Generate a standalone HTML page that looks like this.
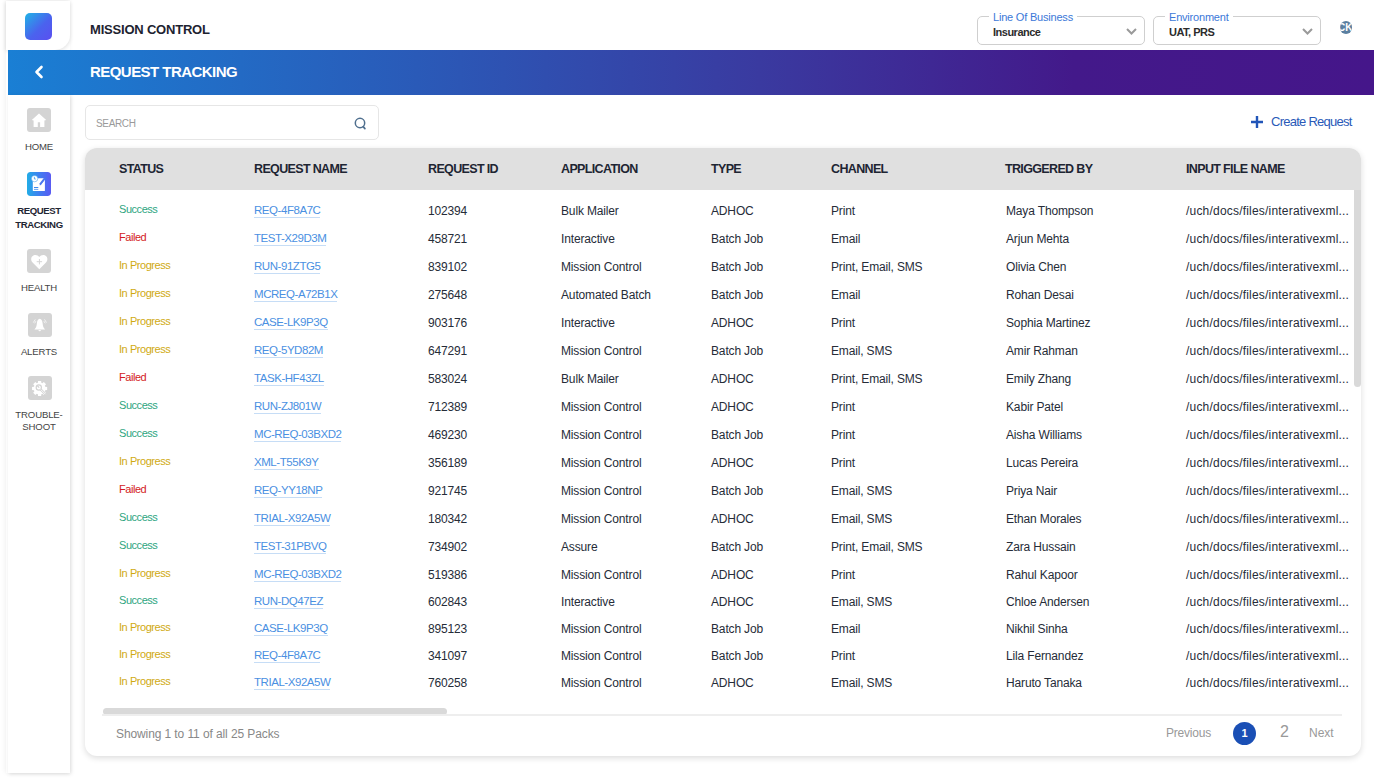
<!DOCTYPE html>
<html><head><meta charset="utf-8">
<style>
*{box-sizing:border-box;margin:0;padding:0}
html,body{width:1374px;height:782px;overflow:hidden;background:#fff;font-family:"Liberation Sans",sans-serif;color:#2b3240}
.abs{position:absolute}
#logo{left:6px;top:1px;width:64px;height:49px;background:#fff;border-bottom-right-radius:15px;box-shadow:0 1px 4px rgba(0,0,0,.14)}
#logosq{left:25px;top:13px;width:27px;height:27px;border-radius:5px;background:linear-gradient(135deg,#20b4e6 0%,#4a63ee 55%,#5b4ff0 100%)}
#mc{left:90px;top:22px;font-size:13px;font-weight:bold;color:#1d2330;letter-spacing:-0.2px;white-space:nowrap}
.dd{top:16px;width:168px;height:29px;border:1px solid #cfcfcf;border-radius:5px;background:#fff}
.dd .lg{position:absolute;left:11px;top:-6px;background:#fff;padding:0 4px;font-size:11px;color:#3b78d8;line-height:13px;letter-spacing:-0.2px;white-space:nowrap}
.dd .val{position:absolute;left:15px;top:9px;font-size:11px;font-weight:bold;color:#2c2c2c;line-height:13px;letter-spacing:-0.5px;white-space:nowrap}
.dd svg{position:absolute;right:7px;top:11px}
#avatar{left:1339.5px;top:21px;width:12.5px;height:13px;border-radius:50%;background:#5a7fa0;color:#fff;font-size:10px;font-weight:bold;line-height:13px;text-indent:-1px;letter-spacing:0;overflow:hidden;white-space:nowrap;display:flex;justify-content:center}
#banner{left:8px;top:50px;width:1366px;height:45px;background:linear-gradient(90deg,#1a7fd4 0%,#2a5ab8 30%,#3a3aa0 55%,#43198a 78%,#45168a 100%)}
#rt{left:90px;top:63px;font-size:15px;font-weight:bold;color:#fff;letter-spacing:-0.55px;white-space:nowrap}
#side{left:8px;top:95px;width:62px;height:678px;background:#fff;box-shadow:1px 1px 4px rgba(0,0,0,.13)}
.nav{position:absolute;left:0;width:62px;text-align:center}
.nav .ic{position:absolute;left:19px;top:0;width:24px;height:24px;border-radius:3px}
#nal .ic,#ntr .ic{left:20px}
.nav .lb{position:absolute;left:-5px;margin-top:1px;width:72px;font-size:9.6px;color:#444;line-height:13.5px;text-align:center;letter-spacing:-0.15px}
.nav.act .lb{color:#1f2633;font-weight:bold;letter-spacing:-0.4px}
#search{left:85px;top:105px;width:294px;height:35px;border:1px solid #e6e6e6;border-radius:5px;background:#fff}
#search .ph{position:absolute;left:10px;top:12px;font-size:10px;color:#9a9a9a;letter-spacing:-0.35px}
#search svg{position:absolute;left:268px;top:10.5px}
#create{left:1251px;top:114px;white-space:nowrap}
#create span{position:absolute;left:20px;top:0px;font-size:13px;color:#2a5ab8;letter-spacing:-0.75px}
#card{left:85px;top:148px;width:1276px;height:608px;background:#fff;border-radius:12px;box-shadow:0 2px 6px rgba(0,0,0,.14);overflow:hidden}
#thead{position:absolute;left:0;top:0;width:1276px;height:42px;background:#e0e0e0}
.th{position:absolute;top:14px;font-size:12.5px;line-height:15px;font-weight:bold;color:#1e2533;letter-spacing:-0.65px;white-space:nowrap}
.row{position:absolute;left:0;width:1270px;height:20px}
.row div{position:absolute;top:0;white-space:nowrap;font-size:12px;line-height:14px;letter-spacing:-0.15px;color:#262c38}
.row .st{font-size:11px;top:-2px;letter-spacing:-0.45px}
.row .s{color:#2ea57f}.row .f{color:#d31b23}.row .p{color:#d0aa12}
.row .fn{letter-spacing:0.2px}
.row .ln{color:#4a90e2;font-size:11.5px;letter-spacing:-0.45px;border-bottom:1.5px solid #c6ddf6;line-height:13px}
#vscroll{left:1269px;top:42px;width:7px;height:197px;background:#d9d9d9;border-radius:0 0 4px 4px}
#hscroll{left:18px;top:560px;width:344px;height:7px;background:#d9d9d9;border-radius:4px}
#sep{left:17px;top:566px;width:1240px;height:2px;background:#eeeeee}
#showing{left:31px;top:579px;font-size:12px;color:#888;letter-spacing:-0.1px;white-space:nowrap}
.pg{position:absolute;white-space:nowrap;color:#999;font-size:12px}
#pg1{position:absolute;left:1148px;top:574px;width:23px;height:23px;border-radius:50%;background:#1a4fb5;color:#fff;font-size:11px;font-weight:bold;text-align:center;line-height:23px}
</style></head><body>
<div class="abs" style="left:6px;top:1px;width:64px;height:772px;box-shadow:-1px 0 5px rgba(0,0,0,.06)"></div>
<div id="logo" class="abs"></div>
<div id="logosq" class="abs"></div>
<div id="mc" class="abs">MISSION CONTROL</div>

<div class="abs dd" style="left:977px"><div class="lg">Line Of Business</div><div class="val">Insurance</div>
<svg width="11" height="7" viewBox="0 0 11 7"><path d="M1 1 L5.5 5.5 L10 1" fill="none" stroke="#9a9a9a" stroke-width="2"/></svg></div>
<div class="abs dd" style="left:1153px"><div class="lg">Environment</div><div class="val">UAT, PRS</div>
<svg width="11" height="7" viewBox="0 0 11 7"><path d="M1 1 L5.5 5.5 L10 1" fill="none" stroke="#9a9a9a" stroke-width="2"/></svg></div>
<div id="avatar" class="abs">CK</div>

<div id="banner" class="abs"></div>
<svg class="abs" style="left:33px;top:65px" width="12" height="14" viewBox="0 0 12 14"><path d="M8.5 2 L3.5 7 L8.5 12" fill="none" stroke="#fff" stroke-width="2.6" stroke-linecap="round" stroke-linejoin="round"/></svg>
<div id="rt" class="abs">REQUEST TRACKING</div>

<div id="side" class="abs">
 <div class="nav" style="top:13px"><svg class="ic" width="24" height="24" viewBox="0 0 24 24" style="background:#d4d4d4"><path d="M12 5.6 L19.2 12.1 L17.4 12.6 V19 H13.1 V14.2 H10.8 V19 H6.6 V12.6 L4.8 12.1 Z" fill="#fff"/></svg><div class="lb" style="top:31px">HOME</div></div>
 <div class="nav act" style="top:77px"><svg class="ic" width="24" height="24" viewBox="0 0 24 24"><defs><linearGradient id="rg" x1="0" y1="0" x2="1" y2="0"><stop offset="0" stop-color="#22ade6"/><stop offset="0.5" stop-color="#3f7ff0"/><stop offset="1" stop-color="#5a5af2"/></linearGradient></defs><rect width="24" height="24" rx="3" fill="url(#rg)"/><rect x="5.8" y="6.2" width="12.1" height="12.8" rx="0.6" fill="#fff"/><path d="M18.2 5.6 L13.2 12.4 L12.6 13.4 L13.6 12.9 L18.6 6.6 Z" fill="#4a78ee"/><path d="M17.9 6.2 L12.9 12.7" stroke="#4a78ee" stroke-width="1.9"/><circle cx="7.6" cy="6.6" r="3.2" fill="#fff" stroke="#3a9aea" stroke-width="0.5"/><path d="M7.4 4.8 V7 H8.8" fill="none" stroke="#3a9aea" stroke-width="0.8"/><rect x="7" y="15" width="4.3" height="1.1" fill="#3f8aee"/><rect x="7" y="17.1" width="4.3" height="0.7" fill="#3f8aee"/></svg><div class="lb" style="top:31px">REQUEST<br>TRACKING</div></div>
 <div class="nav" style="top:154px"><svg class="ic" width="24" height="24" viewBox="0 0 24 24" style="background:#d4d4d4"><path d="M12.3 20.2 L5.6 13.6 C3.2 11.2 3.9 6.8 7.6 6.1 C9.7 5.8 11.2 6.8 12.3 8.1 C13.4 6.8 14.9 5.8 17 6.1 C20.7 6.8 21.4 11.2 19 13.6 Z" fill="#fff"/><path d="M12.4 10 V15.4 M9.7 12.7 H15.1" stroke="#d4d4d4" stroke-width="1"/></svg><div class="lb" style="top:31px">HEALTH</div></div>
 <div class="nav" style="top:218px" id="nal"><svg class="ic" width="24" height="24" viewBox="0 0 24 24" style="background:#d4d4d4"><path d="M11.7 5.8 C10.2 6.1 9.1 7.6 8.9 10.2 C8.7 13 7.9 15 6.4 16.6 H17.1 C15.6 15 14.8 13 14.6 10.2 C14.4 7.6 13.2 6.1 11.7 5.8 Z" fill="#fff"/><ellipse cx="11.7" cy="17.6" rx="1.3" ry="0.7" fill="#fff"/><path d="M5.3 9.6 L7.3 6.4 M6.6 10.3 L7.9 8.2 M18.5 9.6 L16.5 6.4 M17.2 10.3 L15.9 8.2" stroke="#fff" stroke-width="0.9" opacity="0.8"/></svg><div class="lb" style="top:31px">ALERTS</div></div>
 <div class="nav" style="top:281px" id="ntr"><svg class="ic" width="24" height="24" viewBox="0 0 24 24" style="background:#d4d4d4"><path d="M19.15 10.97 L19.15 14.03 L17.24 14.24 L16.82 15.25 L18.02 16.75 L15.85 18.92 L14.35 17.72 L13.34 18.14 L13.13 20.05 L10.07 20.05 L9.86 18.14 L8.85 17.72 L7.35 18.92 L5.18 16.75 L6.38 15.25 L5.96 14.24 L4.05 14.03 L4.05 10.97 L5.96 10.76 L6.38 9.75 L5.18 8.25 L7.35 6.08 L8.85 7.28 L9.86 6.86 L10.07 4.95 L13.13 4.95 L13.34 6.86 L14.35 7.28 L15.85 6.08 L18.02 8.25 L16.82 9.75 L17.24 10.76 Z" fill="#fff"/><circle cx="10.8" cy="11.5" r="2.6" fill="none" stroke="#d4d4d4" stroke-width="1.2"/><path d="M12.6 13.4 L17.6 18.4" stroke="#d4d4d4" stroke-width="2.2"/><path d="M12.8 13.6 L17.4 18.2" stroke="#fff" stroke-width="0.9"/><path d="M9.4 9.8 L11.2 11.6" stroke="#d4d4d4" stroke-width="1.3"/></svg><div class="lb" style="top:32px;line-height:12px">TROUBLE-<br>SHOOT</div></div>
</div>

<div id="search" class="abs"><div class="ph">SEARCH</div>
<svg width="14" height="14" viewBox="0 0 14 14"><circle cx="6" cy="6" r="4.7" fill="none" stroke="#4f6f8e" stroke-width="1.5"/><path d="M9.2 9.6 L10.9 11.6" stroke="#4f6f8e" stroke-width="1.7" stroke-linecap="round"/></svg></div>

<div id="create" class="abs"><svg width="14" height="14" viewBox="0 0 14 14" style="position:absolute;left:-0.7px;top:0.5px"><path d="M7 1 V13 M1 7 H13" stroke="#2155b8" stroke-width="2.4"/></svg><span>Create Request</span></div>

<div id="card" class="abs">
 <div id="thead">
  <div class="th" style="left:34px">STATUS</div>
  <div class="th" style="left:169px">REQUEST NAME</div>
  <div class="th" style="left:343px">REQUEST ID</div>
  <div class="th" style="left:476px">APPLICATION</div>
  <div class="th" style="left:626px">TYPE</div>
  <div class="th" style="left:746px">CHANNEL</div>
  <div class="th" style="left:920px">TRIGGERED BY</div>
  <div class="th" style="left:1101px">INPUT FILE NAME</div>
 </div>
 <div id="rows">
 <div class="row" style="top:56px"><div class="st s" style="left:34px">Success</div><div class="ln" style="left:169px">REQ-4F8A7C</div><div style="left:343px">102394</div><div style="left:476px">Bulk Mailer</div><div style="left:626px">ADHOC</div><div style="left:746px">Print</div><div style="left:921px">Maya Thompson</div><div class="fn" style="left:1101px">/uch/docs/files/interativexml...</div></div>
 <div class="row" style="top:84px"><div class="st f" style="left:34px">Failed</div><div class="ln" style="left:169px">TEST-X29D3M</div><div style="left:343px">458721</div><div style="left:476px">Interactive</div><div style="left:626px">Batch Job</div><div style="left:746px">Email</div><div style="left:921px">Arjun Mehta</div><div class="fn" style="left:1101px">/uch/docs/files/interativexml...</div></div>
 <div class="row" style="top:112px"><div class="st p" style="left:34px">In Progress</div><div class="ln" style="left:169px">RUN-91ZTG5</div><div style="left:343px">839102</div><div style="left:476px">Mission Control</div><div style="left:626px">Batch Job</div><div style="left:746px">Print, Email, SMS</div><div style="left:921px">Olivia Chen</div><div class="fn" style="left:1101px">/uch/docs/files/interativexml...</div></div>
 <div class="row" style="top:140px"><div class="st p" style="left:34px">In Progress</div><div class="ln" style="left:169px">MCREQ-A72B1X</div><div style="left:343px">275648</div><div style="left:476px">Automated Batch</div><div style="left:626px">Batch Job</div><div style="left:746px">Email</div><div style="left:921px">Rohan Desai</div><div class="fn" style="left:1101px">/uch/docs/files/interativexml...</div></div>
 <div class="row" style="top:168px"><div class="st p" style="left:34px">In Progress</div><div class="ln" style="left:169px">CASE-LK9P3Q</div><div style="left:343px">903176</div><div style="left:476px">Interactive</div><div style="left:626px">ADHOC</div><div style="left:746px">Print</div><div style="left:921px">Sophia Martinez</div><div class="fn" style="left:1101px">/uch/docs/files/interativexml...</div></div>
 <div class="row" style="top:196px"><div class="st p" style="left:34px">In Progress</div><div class="ln" style="left:169px">REQ-5YD82M</div><div style="left:343px">647291</div><div style="left:476px">Mission Control</div><div style="left:626px">Batch Job</div><div style="left:746px">Email, SMS</div><div style="left:921px">Amir Rahman</div><div class="fn" style="left:1101px">/uch/docs/files/interativexml...</div></div>
 <div class="row" style="top:224px"><div class="st f" style="left:34px">Failed</div><div class="ln" style="left:169px">TASK-HF43ZL</div><div style="left:343px">583024</div><div style="left:476px">Bulk Mailer</div><div style="left:626px">ADHOC</div><div style="left:746px">Print, Email, SMS</div><div style="left:921px">Emily Zhang</div><div class="fn" style="left:1101px">/uch/docs/files/interativexml...</div></div>
 <div class="row" style="top:252px"><div class="st s" style="left:34px">Success</div><div class="ln" style="left:169px">RUN-ZJ801W</div><div style="left:343px">712389</div><div style="left:476px">Mission Control</div><div style="left:626px">ADHOC</div><div style="left:746px">Print</div><div style="left:921px">Kabir Patel</div><div class="fn" style="left:1101px">/uch/docs/files/interativexml...</div></div>
 <div class="row" style="top:280px"><div class="st s" style="left:34px">Success</div><div class="ln" style="left:169px">MC-REQ-03BXD2</div><div style="left:343px">469230</div><div style="left:476px">Mission Control</div><div style="left:626px">Batch Job</div><div style="left:746px">Print</div><div style="left:921px">Aisha Williams</div><div class="fn" style="left:1101px">/uch/docs/files/interativexml...</div></div>
 <div class="row" style="top:308px"><div class="st p" style="left:34px">In Progress</div><div class="ln" style="left:169px">XML-T55K9Y</div><div style="left:343px">356189</div><div style="left:476px">Mission Control</div><div style="left:626px">ADHOC</div><div style="left:746px">Print</div><div style="left:921px">Lucas Pereira</div><div class="fn" style="left:1101px">/uch/docs/files/interativexml...</div></div>
 <div class="row" style="top:336px"><div class="st f" style="left:34px">Failed</div><div class="ln" style="left:169px">REQ-YY18NP</div><div style="left:343px">921745</div><div style="left:476px">Mission Control</div><div style="left:626px">Batch Job</div><div style="left:746px">Email, SMS</div><div style="left:921px">Priya Nair</div><div class="fn" style="left:1101px">/uch/docs/files/interativexml...</div></div>
 <div class="row" style="top:364px"><div class="st s" style="left:34px">Success</div><div class="ln" style="left:169px">TRIAL-X92A5W</div><div style="left:343px">180342</div><div style="left:476px">Mission Control</div><div style="left:626px">ADHOC</div><div style="left:746px">Email, SMS</div><div style="left:921px">Ethan Morales</div><div class="fn" style="left:1101px">/uch/docs/files/interativexml...</div></div>
 <div class="row" style="top:392px"><div class="st s" style="left:34px">Success</div><div class="ln" style="left:169px">TEST-31PBVQ</div><div style="left:343px">734902</div><div style="left:476px">Assure</div><div style="left:626px">Batch Job</div><div style="left:746px">Print, Email, SMS</div><div style="left:921px">Zara Hussain</div><div class="fn" style="left:1101px">/uch/docs/files/interativexml...</div></div>
 <div class="row" style="top:420px"><div class="st p" style="left:34px">In Progress</div><div class="ln" style="left:169px">MC-REQ-03BXD2</div><div style="left:343px">519386</div><div style="left:476px">Mission Control</div><div style="left:626px">ADHOC</div><div style="left:746px">Print</div><div style="left:921px">Rahul Kapoor</div><div class="fn" style="left:1101px">/uch/docs/files/interativexml...</div></div>
 <div class="row" style="top:447px"><div class="st s" style="left:34px">Success</div><div class="ln" style="left:169px">RUN-DQ47EZ</div><div style="left:343px">602843</div><div style="left:476px">Interactive</div><div style="left:626px">ADHOC</div><div style="left:746px">Email, SMS</div><div style="left:921px">Chloe Andersen</div><div class="fn" style="left:1101px">/uch/docs/files/interativexml...</div></div>
 <div class="row" style="top:474px"><div class="st p" style="left:34px">In Progress</div><div class="ln" style="left:169px">CASE-LK9P3Q</div><div style="left:343px">895123</div><div style="left:476px">Mission Control</div><div style="left:626px">Batch Job</div><div style="left:746px">Email</div><div style="left:921px">Nikhil Sinha</div><div class="fn" style="left:1101px">/uch/docs/files/interativexml...</div></div>
 <div class="row" style="top:501px"><div class="st p" style="left:34px">In Progress</div><div class="ln" style="left:169px">REQ-4F8A7C</div><div style="left:343px">341097</div><div style="left:476px">Mission Control</div><div style="left:626px">Batch Job</div><div style="left:746px">Print</div><div style="left:921px">Lila Fernandez</div><div class="fn" style="left:1101px">/uch/docs/files/interativexml...</div></div>
 <div class="row" style="top:528px"><div class="st p" style="left:34px">In Progress</div><div class="ln" style="left:169px">TRIAL-X92A5W</div><div style="left:343px">760258</div><div style="left:476px">Mission Control</div><div style="left:626px">ADHOC</div><div style="left:746px">Email, SMS</div><div style="left:921px">Haruto Tanaka</div><div class="fn" style="left:1101px">/uch/docs/files/interativexml...</div></div>
 </div><!--/rows-->
 <div id="vscroll" class="abs"></div>
 <div id="hscroll" class="abs"></div>
 <div id="sep" class="abs"></div>
 <div id="showing" class="abs">Showing 1 to 11 of all 25 Packs</div>
 <div class="pg" style="left:1081px;top:578px;letter-spacing:-0.2px">Previous</div>
 <div id="pg1">1</div>
 <div class="pg" style="left:1195px;top:575px;font-size:16px">2</div>
 <div class="pg" style="left:1224px;top:578px">Next</div>
</div>
</body></html>
